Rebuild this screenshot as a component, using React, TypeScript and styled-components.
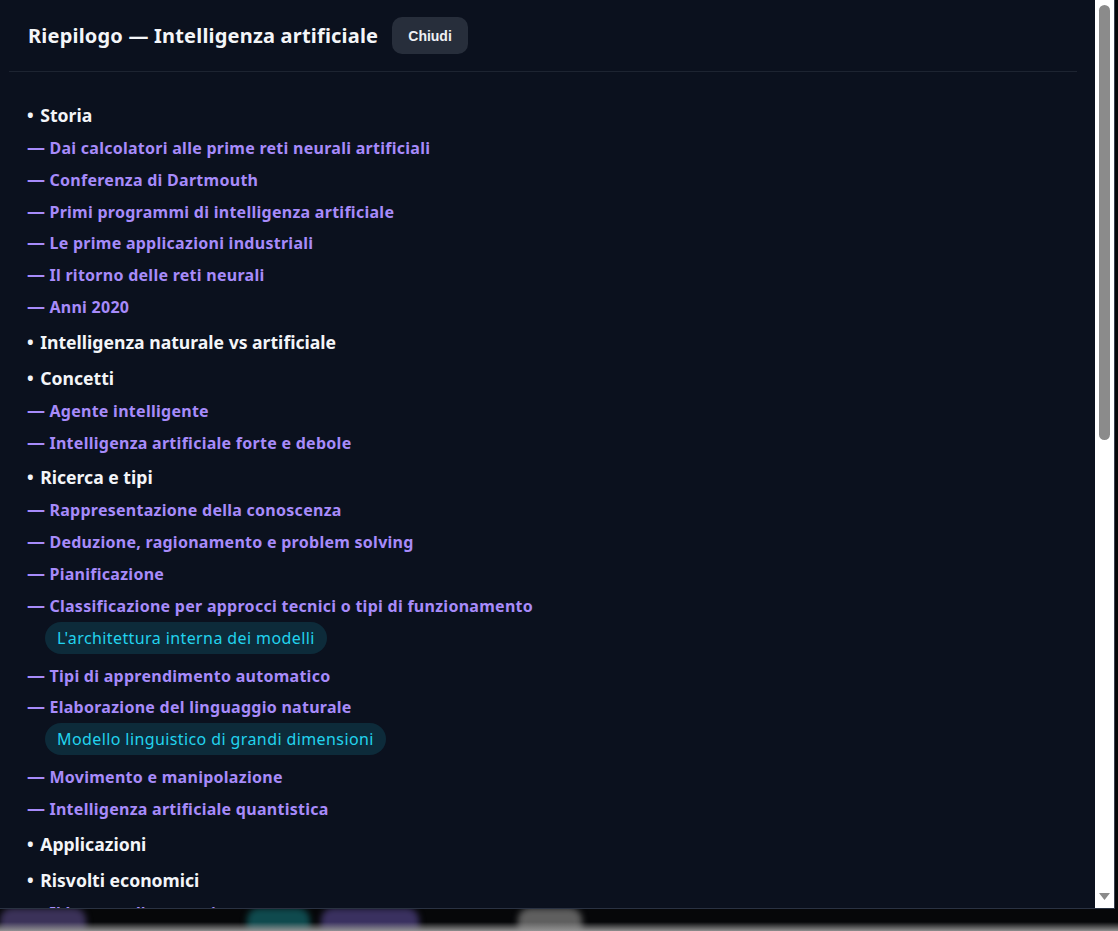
import styled, { createGlobalStyle } from "styled-components";

const GlobalStyle = createGlobalStyle`
    html, body {
        margin: 0;
        padding: 0;
        background: #060709;
        overflow: hidden;
    }
    * { box-sizing: border-box; }
`;

const FONT = `"Segoe UI", "Noto Sans", "Open Sans", sans-serif`;

type Sub = { text: string; chips?: string[] };
type Section = { title: string; subs: Sub[] };

const sections: Section[] = [
    {
        title: "Storia",
        subs: [
            { text: "Dai calcolatori alle prime reti neurali artificiali" },
            { text: "Conferenza di Dartmouth" },
            { text: "Primi programmi di intelligenza artificiale" },
            { text: "Le prime applicazioni industriali" },
            { text: "Il ritorno delle reti neurali" },
            { text: "Anni 2020" },
        ],
    },
    { title: "Intelligenza naturale vs artificiale", subs: [] },
    {
        title: "Concetti",
        subs: [
            { text: "Agente intelligente" },
            { text: "Intelligenza artificiale forte e debole" },
        ],
    },
    {
        title: "Ricerca e tipi",
        subs: [
            { text: "Rappresentazione della conoscenza" },
            { text: "Deduzione, ragionamento e problem solving" },
            { text: "Pianificazione" },
            {
                text: "Classificazione per approcci tecnici o tipi di funzionamento",
                chips: ["L'architettura interna dei modelli"],
            },
            { text: "Tipi di apprendimento automatico" },
            {
                text: "Elaborazione del linguaggio naturale",
                chips: ["Modello linguistico di grandi dimensioni"],
            },
            { text: "Movimento e manipolazione" },
            { text: "Intelligenza artificiale quantistica" },
        ],
    },
    { title: "Applicazioni", subs: [] },
    {
        title: "Risvolti economici",
        subs: [{ text: "Il lavoro e l'occupazione" }],
    },
];

const pills = [
    { w: 86, gap: 0, tone: "#3b3259" },
    { w: 63, gap: 161, tone: "#0f4a4e" },
    { w: 98, gap: 11, tone: "#3a3160" },
    { w: 64, gap: 99, tone: "#5f5f5f" },
];

const Backdrop = styled.div`
    position: relative;
    height: 100vh;
    display: flex;
    flex-direction: column;
    justify-content: flex-end;
    background: #060709;

    &::after {
        content: "";
        position: absolute;
        left: 0;
        right: 0;
        bottom: 0;
        height: 9px;
        background: linear-gradient(to bottom, rgba(140, 140, 140, 0), rgba(150, 150, 150, 0.95));
    }
`;

const BottomBar = styled.div`
    height: 23px;
    display: flex;
    align-items: flex-start;
    filter: blur(3px);
`;

const BlurPill = styled.div<{ $w: number; $gap: number; $tone: string }>`
    width: ${(p) => p.$w}px;
    margin-left: ${(p) => p.$gap}px;
    height: 34px;
    border-radius: 12px;
    background: ${(p) => p.$tone};
`;

const Dialog = styled.div`
    position: fixed;
    top: 0;
    left: 0;
    width: 1115px;
    height: 909px;
    display: flex;
    background: #0b111e;
    border-bottom: 1px solid #2a3242;
    border-right: 1px solid #3a4150;
    font-family: ${FONT};
`;

const ScrollArea = styled.div`
    flex: 1;
    min-width: 0;
    overflow: hidden;
    padding: 0 18px 0 9px;
`;

const Scrollbar = styled.div`
    width: 19px;
    background: #ffffff;
    display: flex;
    flex-direction: column;
    padding-top: 5px;
`;

const Thumb = styled.div`
    width: 11px;
    height: 435px;
    margin-left: 4px;
    border-radius: 6px;
    background: #8b8b8b;
`;

const ScrollArrow = styled.svg`
    margin-top: auto;
    display: block;
`;

const Header = styled.header`
    display: flex;
    align-items: center;
    gap: 14px;
    padding: 17px 19px;
    border-bottom: 1px solid #1d2431;
`;

const Title = styled.h2`
    margin: 0;
    padding-top: 1px;
    font-size: 20px;
    font-weight: 700;
    line-height: 28px;
    letter-spacing: 0.2px;
    color: #f3f5f8;
`;

const CloseButton = styled.button`
    border: none;
    border-radius: 10px;
    background: #272e3b;
    color: #eef0f4;
    padding: 0 16px;
    height: 37px;
    font-family: "Liberation Sans", Arial, sans-serif;
    font-weight: 700;
    font-size: 14px;
    cursor: pointer;
`;

const Outline = styled.ul`
    list-style: none;
    margin: 0;
    padding: 24px 0 0 18px;
`;

const TopItem = styled.li`
    padding: 7px 0 5px;
    font-size: 17.6px;
    font-weight: 700;
    line-height: 24px;
    color: #f3f5f8;
`;

const Bullet = styled.span`
    margin-right: 2px;
`;

const SubItem = styled.li`
    padding: 5px 0 3px;
    font-size: 16px;
    font-weight: 700;
    line-height: 23.8px;
    letter-spacing: 0.27px;
    color: #a78bfa;
`;

const Dash = styled.span`
    font-size: 18px;
    line-height: 0;
    letter-spacing: 0;
`;

const ChipRow = styled.li`
    display: flex;
    gap: 8px;
    padding-left: 18px;
    margin-bottom: 6px;
`;

const Chip = styled.span`
    display: inline-block;
    height: 32px;
    padding: 0 12px;
    border-radius: 16px;
    background: #0d2b3a;
    color: #22d3ee;
    font-size: 16px;
    font-weight: 400;
    line-height: 32px;
    letter-spacing: 0.4px;
`;

export default function App() {
    return (
        <>
            <GlobalStyle />
            <Backdrop>
                <BottomBar>
                    {pills.map((p, i) => (
                        <BlurPill key={i} $w={p.w} $gap={p.gap} $tone={p.tone} />
                    ))}
                </BottomBar>
            </Backdrop>
            <Dialog role="dialog">
                <ScrollArea>
                    <Header>
                        <Title>Riepilogo — Intelligenza artificiale</Title>
                        <CloseButton>Chiudi</CloseButton>
                    </Header>
                    <Outline>
                        {sections.map((s) => (
                            <>
                                <TopItem key={s.title}>
                                    <Bullet>•</Bullet> {s.title}
                                </TopItem>
                                {s.subs.map((sub) => (
                                    <>
                                        <SubItem key={sub.text}>
                                            <Dash>—</Dash> {sub.text}
                                        </SubItem>
                                        {sub.chips ? (
                                            <ChipRow>
                                                {sub.chips.map((c) => (
                                                    <Chip key={c}>{c}</Chip>
                                                ))}
                                            </ChipRow>
                                        ) : null}
                                    </>
                                ))}
                            </>
                        ))}
                    </Outline>
                </ScrollArea>
                <Scrollbar>
                    <Thumb />
                    <ScrollArrow width="19" height="17" viewBox="0 0 19 17">
                        <polygon points="4,2 15,2 9.5,9" fill="#8b8b8b" />
                    </ScrollArrow>
                </Scrollbar>
            </Dialog>
        </>
    );
}
